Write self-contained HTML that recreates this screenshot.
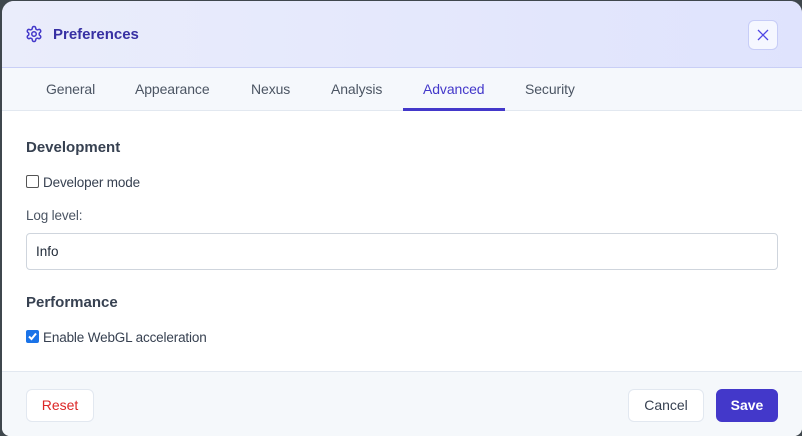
<!DOCTYPE html>
<html><head><style>
*{margin:0;padding:0;box-sizing:border-box}
body{width:802px;height:436px;background:#3f474d;font-family:"Liberation Sans",sans-serif;position:relative;overflow:hidden}
.dlg{position:absolute;left:2px;top:1px;width:800px;height:435px;background:#fff;border-radius:12px 12px 8px 8px;overflow:hidden}
.hdr{position:absolute;left:0;top:0;width:800px;height:67px;background:linear-gradient(90deg,#eaedfb,#dfe3fd);border-bottom:1px solid #c9cff6}
.title{position:absolute;left:51px;top:25px;font-size:15px;font-weight:bold;color:#3730a3}
.close{position:absolute;left:746px;top:19px;width:30px;height:30px;border:1px solid #c7cdf7;border-radius:6px;background:#f5f7ff}
.tabs{position:absolute;left:0;top:67px;width:800px;height:43px;background:#f5f8fc;border-bottom:1px solid #e2e8f0}
.tab{position:absolute;top:13px;font-size:14px;color:#4b5563;letter-spacing:-0.1px}
.ul{position:absolute;left:401px;top:40px;width:102px;height:3px;background:#4338ca}
.t{position:absolute;color:#374151}
.h{font-size:15px;font-weight:bold}
.s{font-size:13.5px;letter-spacing:-0.15px}
.inp{position:absolute;left:24px;top:232px;width:752px;height:37px;border:1px solid #cfd5dd;border-radius:4px;font-size:13.5px;color:#1f2937;padding:10px 9px}
.ftr{position:absolute;left:0;top:370px;width:800px;height:65px;background:#f5f8fb;border-top:1px solid #e2e8f0}
.btn{position:absolute;top:17px;height:33px;border:1px solid #e2e8f0;border-radius:6px;background:#fff;font-size:14px;text-align:center;line-height:31px}
.cb{position:absolute;left:24px;width:13px;height:13px;border:1px solid #555;border-radius:2px;background:#fff}
</style></head><body>
<div class="dlg">
<div class="hdr">
<svg style="position:absolute;left:23px;top:24px" width="18" height="18" viewBox="0 0 24 24" fill="none" stroke="#4338ca" stroke-width="2" stroke-linecap="round" stroke-linejoin="round"><path d="M12.22 2h-.44a2 2 0 0 0-2 2v.18a2 2 0 0 1-1 1.730l-.43.25a2 2 0 0 1-2 0l-.15-.08a2 2 0 0 0-2.730.73l-.22.38a2 2 0 0 0 .73 2.730l.15.1a2 2 0 0 1 1 1.720v.51a2 2 0 0 1-1 1.740l-.15.09a2 2 0 0 0-.73 2.730l.22.38a2 2 0 0 0 2.730.73l.15-.08a2 2 0 0 1 2 0l.43.25a2 2 0 0 1 1 1.730V20a2 2 0 0 0 2 2h.44a2 2 0 0 0 2-2v-.18a2 2 0 0 1 1-1.730l.43-.25a2 2 0 0 1 2 0l.15.08a2 2 0 0 0 2.730-.73l.22-.39a2 2 0 0 0-.73-2.730l-.15-.08a2 2 0 0 1-1-1.740v-.5a2 2 0 0 1 1-1.740l.15-.09a2 2 0 0 0 .73-2.730l-.22-.38a2 2 0 0 0-2.730-.73l-.15.08a2 2 0 0 1-2 0l-.43-.25a2 2 0 0 1-1-1.730V4a2 2 0 0 0-2-2z"/><circle cx="12" cy="12" r="3"/></svg>
<div class="title">Preferences</div>
<div class="close"><svg style="position:absolute;left:8px;top:8px" width="12" height="12" viewBox="0 0 12 12" stroke="#4f46e5" stroke-width="1.3"><path d="M1 1L11 11M11 1L1 11"/></svg></div>
</div>
<div class="tabs">
<div class="tab" style="left:44px">General</div>
<div class="tab" style="left:133px">Appearance</div>
<div class="tab" style="left:249px">Nexus</div>
<div class="tab" style="left:329px">Analysis</div>
<div class="tab" style="left:421px;color:#4338ca">Advanced</div>
<div class="tab" style="left:523px">Security</div>
<div class="ul"></div>
</div>
<div class="t h" style="left:24px;top:138px">Development</div>
<div class="cb" style="top:174px"></div>
<div class="t s" style="left:41px;top:174px">Developer mode</div>
<div class="t s" style="left:24px;top:207px;color:#4b5563">Log level:</div>
<div class="inp">Info</div>
<div class="t h" style="left:24px;top:293px">Performance</div>
<div class="cb" style="top:329px;background:#1a73e8;border-color:#1a73e8"><svg style="position:absolute;left:0;top:0" width="11" height="11" viewBox="0 0 11 11"><path d="M2 5.5L4.5 8L9 2.5" stroke="#fff" stroke-width="2" fill="none"/></svg></div>
<div class="t s" style="left:41px;top:329px">Enable WebGL acceleration</div>
<div class="ftr">
<div class="btn" style="left:24px;width:68px;color:#dc2626">Reset</div>
<div class="btn" style="left:626px;width:76px;color:#374151">Cancel</div>
<div class="btn" style="left:714px;width:62px;background:#4338ca;border-color:#4338ca;color:#fff;font-weight:bold">Save</div>
</div>
</div>
</body></html>
